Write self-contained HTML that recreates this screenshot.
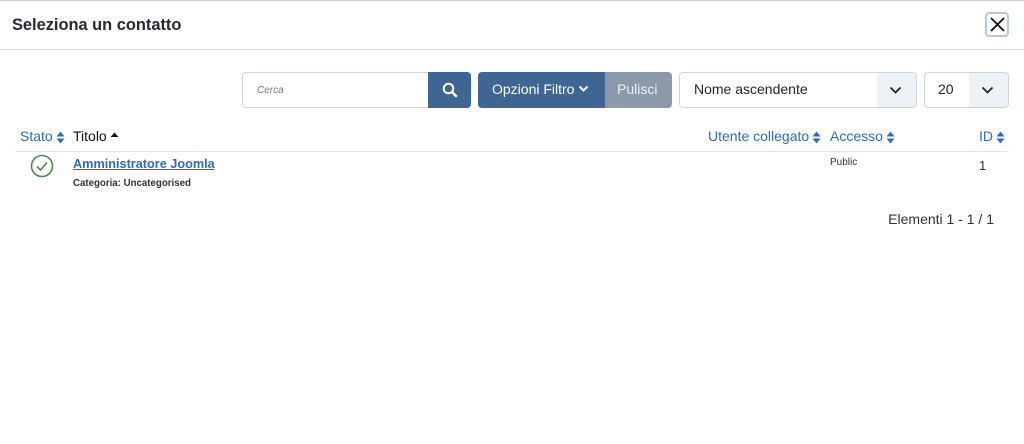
<!DOCTYPE html>
<html><head><meta charset="utf-8"><style>
*{box-sizing:border-box;margin:0;padding:0}
body{width:1024px;height:444px;background:#fff;font-family:"Liberation Sans",sans-serif;position:relative;overflow:hidden;color:#22262a}
.a{position:absolute;white-space:nowrap}
.blue{color:#2f6bbf}
.sort{display:inline-block;vertical-align:middle;margin-left:3px}
</style></head><body>
<div class="a" style="left:0;top:0;width:1024px;height:1px;background:#ccc"></div>
<div class="a" style="left:12px;top:16px;font-size:16.4px;font-weight:bold;color:#252b33">Seleziona un contatto</div>
<div class="a" style="left:985px;top:12px;width:24px;height:25px;border:2px solid #b7c8e4;border-radius:4px"></div>
<svg class="a" style="left:989px;top:16px" width="17" height="17" viewBox="0 0 17 17"><path d="M2 2L15 15M15 2L2 15" stroke="#111" stroke-width="1.8"/></svg>
<div class="a" style="left:0;top:49px;width:1024px;height:1px;background:#dfe3e8"></div>

<div class="a" style="left:242px;top:72px;width:188px;height:36px;border:1px solid #cdd5e0;border-radius:4px 0 0 4px"></div>
<div class="a" style="left:257px;top:85px;font-size:10px;font-style:italic;color:#777">Cerca</div>
<div class="a" style="left:428px;top:72px;width:43px;height:36px;background:#3f6592;border-radius:0 4px 4px 0"></div>
<svg class="a" style="left:442px;top:82px" width="16" height="16" viewBox="0 0 16 16"><circle cx="6.5" cy="6.5" r="4.8" stroke="#fff" stroke-width="2" fill="none"/><path d="M10 10L14 14" stroke="#fff" stroke-width="2.4" stroke-linecap="round"/></svg>
<div class="a" style="left:478px;top:72px;width:127px;height:36px;background:#3f6592;border-radius:4px 0 0 4px"></div>
<div class="a" style="left:492px;top:81px;font-size:14px;color:#fff">Opzioni Filtro</div>
<svg class="a" style="left:578px;top:85px" width="11" height="8" viewBox="0 0 11 8"><path d="M1.5 1.5L5.5 5.5L9.5 1.5" stroke="#fff" stroke-width="2" fill="none"/></svg>
<div class="a" style="left:605px;top:72px;width:67px;height:36px;background:#8c99a8;border-radius:0 4px 4px 0"></div>
<div class="a" style="left:617px;top:81px;font-size:14px;color:#eef1f5">Pulisci</div>

<div class="a" style="left:679px;top:72px;width:238px;height:36px;border:1px solid #cdd5e0;border-radius:4px;overflow:hidden"><div style="position:absolute;right:0;top:0;width:39px;height:100%;background:#eef1f5"></div></div>
<div class="a" style="left:694px;top:81px;font-size:14px;color:#22262a">Nome ascendente</div>
<svg class="a" style="left:889px;top:86px" width="13" height="9" viewBox="0 0 13 9"><path d="M1.5 1.5L6.5 6.5L11.5 1.5" stroke="#222" stroke-width="1.8" fill="none"/></svg>
<div class="a" style="left:924px;top:72px;width:85px;height:36px;border:1px solid #cdd5e0;border-radius:4px;overflow:hidden"><div style="position:absolute;right:0;top:0;width:39px;height:100%;background:#eef1f5"></div></div>
<div class="a" style="left:938px;top:81px;font-size:14px">20</div>
<svg class="a" style="left:981px;top:86px" width="13" height="9" viewBox="0 0 13 9"><path d="M1.5 1.5L6.5 6.5L11.5 1.5" stroke="#222" stroke-width="1.8" fill="none"/></svg>

<div class="a blue" style="left:20px;top:128px;font-size:14px">Stato<svg class="sort" width="9" height="13" viewBox="0 0 9 13"><path d="M0.5 5.5L4.5 0.5L8.5 5.5ZM0.5 7.5L4.5 12.5L8.5 7.5Z" fill="#2f6bbf"/></svg></div>
<div class="a" style="left:73px;top:128px;font-size:14px;color:#111">Titolo<svg class="sort" width="9" height="8" viewBox="0 0 9 8" style="margin-top:-4px"><path d="M0.5 6L4.5 1.5L8.5 6Z" fill="#111"/></svg></div>
<div class="a blue" style="left:708px;top:128px;font-size:14px">Utente collegato<svg class="sort" width="9" height="13" viewBox="0 0 9 13"><path d="M0.5 5.5L4.5 0.5L8.5 5.5ZM0.5 7.5L4.5 12.5L8.5 7.5Z" fill="#2f6bbf"/></svg></div>
<div class="a blue" style="left:830px;top:128px;font-size:14px">Accesso<svg class="sort" width="9" height="13" viewBox="0 0 9 13"><path d="M0.5 5.5L4.5 0.5L8.5 5.5ZM0.5 7.5L4.5 12.5L8.5 7.5Z" fill="#2f6bbf"/></svg></div>
<div class="a blue" style="left:979px;top:128px;font-size:14px">ID<svg class="sort" width="9" height="13" viewBox="0 0 9 13"><path d="M0.5 5.5L4.5 0.5L8.5 5.5ZM0.5 7.5L4.5 12.5L8.5 7.5Z" fill="#2f6bbf"/></svg></div>
<div class="a" style="left:15px;top:151px;width:994px;height:1px;background:#e3e6ea"></div>

<svg class="a" style="left:30px;top:154px" width="24" height="24" viewBox="0 0 24 24"><circle cx="12" cy="12" r="10.5" stroke="#4a8a4e" stroke-width="1.6" fill="none"/><path d="M7 12.5L10.5 16L17 8.5" stroke="#4a8a4e" stroke-width="1.6" fill="none"/></svg>
<div class="a" style="left:73px;top:157px;font-size:12.7px;font-weight:bold;color:#2f6bbf;text-decoration:underline">Amministratore Joomla</div>
<div class="a" style="left:73px;top:178px;font-size:9.7px;font-weight:bold;color:#333">Categoria: Uncategorised</div>
<div class="a" style="left:830px;top:157px;font-size:10px;color:#333">Public</div>
<div class="a" style="left:979px;top:158px;font-size:13px;color:#333">1</div>
<div class="a" style="right:30px;top:211px;font-size:14px;color:#333">Elementi 1 - 1 / 1</div>
</body></html>
